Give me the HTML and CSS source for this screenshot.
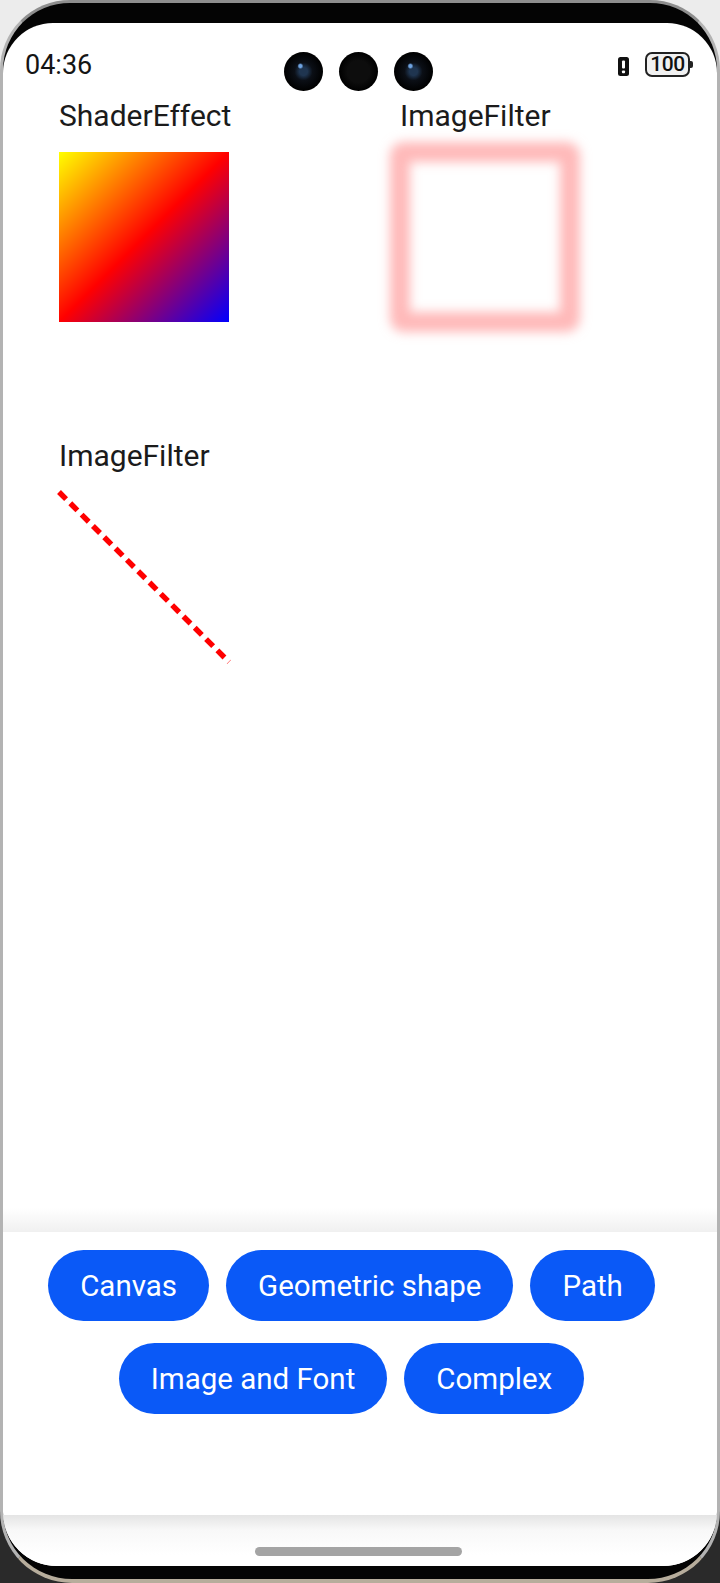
FILE: index.html
```html
<!DOCTYPE html>
<html lang="en">
<head>
<meta charset="utf-8">
<title>Drawing demo</title>
<link rel="stylesheet" href="styles.css">
</head>
<body>
<div class="phone">
  <div class="screen">
    <div class="status">
      <div class="time">04:36</div>
      <div class="cams">
        <span class="cam lens"></span>
        <span class="cam"></span>
        <span class="cam lens"></span>
      </div>
      <div class="sys">
        <svg class="alert" width="11" height="19" viewBox="0 0 11 19">
          <rect x="0" y="0" width="11" height="19" rx="2.5" fill="#111"/>
          <rect x="4" y="3.5" width="3" height="8" rx="1" fill="#fff"/>
          <rect x="4" y="13.5" width="3" height="2.8" rx="0.8" fill="#fff"/>
        </svg>
        <div class="battery"><span>100</span></div>
      </div>
    </div>

    <main class="main">
      <div class="grid">
        <section class="cell">
          <div class="label">ShaderEffect</div>
          <div class="shader"></div>
        </section>
        <section class="cell">
          <div class="label">ImageFilter</div>
          <svg class="art" width="170" height="170" viewBox="0 0 170 170">
            <defs>
              <filter id="soft" x="-40%" y="-40%" width="180%" height="180%">
                <feGaussianBlur stdDeviation="5.5"/>
              </filter>
            </defs>
            <rect x="0" y="0" width="170" height="170" rx="4" fill="none" stroke="#ffb9b9" stroke-width="20" filter="url(#soft)"/>
          </svg>
        </section>
        <section class="cell">
          <div class="label">ImageFilter</div>
          <svg class="art" width="170" height="170" viewBox="0 0 170 170">
            <line x1="0" y1="0" x2="170" y2="170" stroke="#ff0000" stroke-width="5.5" stroke-dasharray="10 6"/>
          </svg>
        </section>
      </div>
    </main>

    <div class="fade"></div>
    <nav class="panel">
      <button class="pill">Canvas</button>
      <button class="pill">Geometric shape</button>
      <button class="pill">Path</button>
      <button class="pill">Image and Font</button>
      <button class="pill">Complex</button>
    </nav>
    <div class="navbar"><span class="home"></span></div>
  </div>
</div>
</body>
</html>
```
FILE: styles.css
```css
html, body {
  margin: 0;
  padding: 0;
}
body {
  width: 720px;
  height: 1583px;
  overflow: hidden;
  background: linear-gradient(#ececec 0 50%, #2a2a2a 50% 100%);
  font-family: Roboto, "Noto Sans", sans-serif;
}
.phone {
  box-sizing: border-box;
  width: 720px;
  height: 1583px;
  border-style: solid;
  border-color: #8e8e8e #b3b3b3 #b7ad9c #b3b3b3;
  border-width: 3px 3px 4px 3px;
  border-radius: 70px 70px 72px 72px;
  background: #040404;
  padding: 20px 0 13px;
}
.screen {
  height: 100%;
  background: #fff;
  border-radius: 50px 50px 54px 54px;
  overflow: hidden;
  display: flex;
  flex-direction: column;
}

/* status bar */
.status {
  height: 72px;
  box-sizing: border-box;
  padding-top: 29px;
  display: grid;
  grid-template-columns: 1fr auto 1fr;
  align-items: start;
}
.time {
  padding-left: 22px;
  font-size: 27px;
  line-height: 27px;
  font-weight: 400;
  color: #151515;
}
.cams {
  display: flex;
  gap: 16px;
  margin-left: -3px;
}
.cam {
  width: 39px;
  height: 39px;
  border-radius: 50%;
  background: radial-gradient(circle at 50% 50%, #0d0d0d 0 40%, #000 70%);
}
.cam.lens {
  background:
    radial-gradient(circle at 42% 36%, #6fa3e0 0 1.5px, transparent 3px),
    radial-gradient(circle at 50% 50%, #1f3550 0 4px, #0b0f16 9px, #000 70%);
}
.sys {
  display: flex;
  justify-content: flex-end;
  align-items: center;
  gap: 16px;
  padding-right: 27px;
  height: 25px;
}
.alert {
  display: block;
  margin-top: 3px;
}
.battery {
  position: relative;
  box-sizing: border-box;
  width: 45px;
  height: 25px;
  border: 2px solid #222;
  border-radius: 7px;
  background: #f1f1f1;
  display: flex;
  align-items: center;
  justify-content: center;
  font-size: 21px;
  line-height: 1;
  letter-spacing: -0.5px;
  color: #111;
  font-weight: 500;
}
.battery::after {
  content: "";
  position: absolute;
  right: -5px;
  top: 7px;
  width: 3px;
  height: 7px;
  background: #222;
  border-radius: 0 2px 2px 0;
}

/* content */
.main {
  flex: 1;
  min-height: 0;
}
.grid {
  display: grid;
  grid-template-columns: 341px 1fr;
  row-gap: 117px;
  padding: 4px 0 0 56px;
}
.cell {
  display: flex;
  flex-direction: column;
  gap: 19px;
}
.label {
  font-size: 30px;
  line-height: 34px;
  color: #1b1b1b;
}
.shader {
  width: 170px;
  height: 170px;
  background: linear-gradient(135deg, #ffff00 0%, #ff0000 50%, #0000ff 100%);
}
.art {
  display: block;
  overflow: visible;
}

/* bottom panel */
.fade {
  height: 24px;
  background: linear-gradient(#ffffff, #f0f0f0);
}
.panel {
  height: 283px;
  box-sizing: border-box;
  padding-top: 18px;
  display: flex;
  flex-wrap: wrap;
  justify-content: center;
  align-content: flex-start;
  row-gap: 22px;
}
.pill {
  height: 71px;
  margin: 0 17px 0 0;
  padding: 0 32px;
  border: 0;
  border-radius: 36px;
  background: #0a59f7;
  color: #fff;
  font-family: Roboto, "Noto Sans", sans-serif;
  font-size: 29.5px;
  font-weight: 400;
}
.navbar {
  height: 51px;
  background: linear-gradient(#e4e4e4 0, #f8f8f8 15px, #ffffff 40px);
  display: flex;
  justify-content: center;
  padding-top: 32px;
  box-sizing: border-box;
}
.home {
  width: 207px;
  height: 9px;
  border-radius: 5px;
  background: #a4a4a4;
  margin-left: -4px;
}
```
